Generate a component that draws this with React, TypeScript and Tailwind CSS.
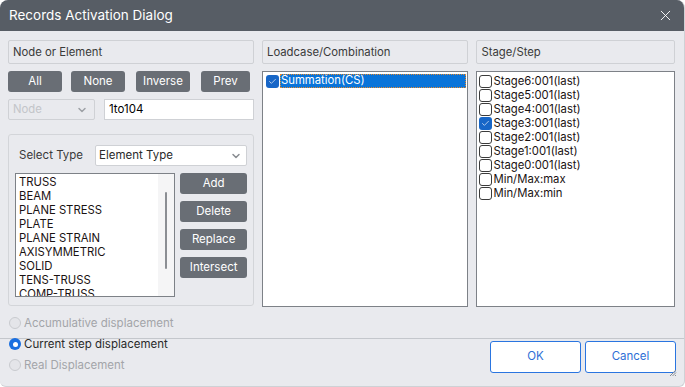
import React from 'react';
import { ChevronDown, X, Check } from 'lucide-react';

const elementTypes = [
  'TRUSS',
  'BEAM',
  'PLANE STRESS',
  'PLATE',
  'PLANE STRAIN',
  'AXISYMMETRIC',
  'SOLID',
  'TENS-TRUSS',
  'COMP-TRUSS',
];

const stages = [
  { label: 'Stage6:001(last)', checked: false },
  { label: 'Stage5:001(last)', checked: false },
  { label: 'Stage4:001(last)', checked: false },
  { label: 'Stage3:001(last)', checked: true },
  { label: 'Stage2:001(last)', checked: false },
  { label: 'Stage1:001(last)', checked: false },
  { label: 'Stage0:001(last)', checked: false },
  { label: 'Min/Max:max', checked: false },
  { label: 'Min/Max:min', checked: false },
];

const GroupHeader: React.FC<{ title: string }> = ({ title }) => (
  <div className="h-[24px] flex items-center px-[4px] border border-[#cfd1d5] rounded-[2px] text-[11.3px] text-[#3a3a3a]">
    {title}
  </div>
);

const GrayButton: React.FC<{ label: string; className?: string }> = ({ label, className }) => (
  <button
    className={`h-[21px] rounded-[3px] bg-[#696e75] text-white text-[11.5px] flex items-center justify-center ${className ?? ''}`}
  >
    {label}
  </button>
);

const CheckBox: React.FC<{ checked: boolean }> = ({ checked }) =>
  checked ? (
    <span className="w-[13px] h-[13px] shrink-0 rounded-[3px] bg-[#1766c7] flex items-center justify-center">
      <Check size={9} strokeWidth={2} className="text-[#dbe6f5]" />
    </span>
  ) : (
    <span className="w-[13px] h-[13px] shrink-0 rounded-[3px] border border-[#3b3b3b] bg-white" />
  );

const Radio: React.FC<{ label: string; checked?: boolean; disabled?: boolean }> = ({ label, checked, disabled }) => (
  <div className="flex items-center gap-[3px] h-[14px] text-[11.5px] leading-[14px]">
    {checked ? (
      <span className="w-[12px] h-[12px] rounded-full bg-[#1a6fe0] flex items-center justify-center">
        <span className="w-[5px] h-[5px] rounded-full bg-white" />
      </span>
    ) : (
      <span className="w-[12px] h-[12px] rounded-full border border-[#c9cbcf] bg-[#e4e5e9]" />
    )}
    <span className={disabled ? 'text-[#a3a5a9]' : 'text-[#2a2a2a]'}>{label}</span>
  </div>
);

export default function App() {
  return (
    <div className="w-[685px] h-[387px] bg-white" style={{ fontFamily: 'Inter, "Noto Sans", sans-serif' }}>
      <div className="w-[685px] h-[387px] flex flex-col rounded-t-[8px] rounded-b-[6px] overflow-hidden border-r border-b border-[#cfd1d5] bg-[#e9eaee]">
        {/* title bar */}
        <div className="h-[31px] shrink-0 bg-[#575d65] flex items-center justify-between pl-[9px] pr-[10px]">
          <span className="text-white text-[13.5px]">Records Activation Dialog</span>
          <X size={17} strokeWidth={1.3} className="text-white" />
        </div>

        {/* main area */}
        <div className="flex pt-[9px] pl-[8px] pr-[9px] gap-[8px]">
          {/* left column */}
          <div className="w-[246px] flex flex-col">
            <GroupHeader title="Node or Element" />
            <div className="flex mt-[7px]">
              <GrayButton label="All" className="w-[54px]" />
              <GrayButton label="None" className="w-[54px] ml-[9px]" />
              <GrayButton label="Inverse" className="w-[54px] ml-[11px]" />
              <GrayButton label="Prev" className="w-[49px] ml-[11px]" />
            </div>
            <div className="flex mt-[7px] gap-[9px]">
              <div className="w-[87px] h-[21px] rounded-[2px] border border-[#cfd1d5] bg-[#e9eaee] flex items-center justify-between pl-[4px] pr-[6px]">
                <span className="text-[11.3px] text-[#c3c5c9]">Node</span>
                <ChevronDown size={12} strokeWidth={3} className="text-[#9ea1a6]" />
              </div>
              <div className="flex-1 h-[21px] bg-white border border-[#cfd1d5] flex items-center px-[4px] text-[11.5px] text-black">
                1to104
              </div>
            </div>
            <div className="mt-[14px] h-[172px] border border-[#d3d5d9] rounded-[3px] px-[6px] pt-[10px]">
              <div className="flex items-center">
                <span className="w-[80px] pl-[4px] text-[11.5px] text-[#3a3a3a]">Select Type</span>
                <div className="flex-1 h-[21px] bg-white border border-[#cfd1d5] rounded-[2px] flex items-center justify-between pl-[3px] pr-[4px]">
                  <span className="text-[11.5px] text-[#2a2a2a]">Element Type</span>
                  <ChevronDown size={12} strokeWidth={3} className="text-[#8a8d92]" />
                </div>
              </div>
              <div className="flex mt-[7px]">
                <div className="w-[161px] h-[124px] bg-white border border-[#7d8187] overflow-hidden flex">
                  <div className="flex-1 pl-[3px] pt-[1px] text-[11.3px] leading-[14px] text-[#1a1212]">
                    {elementTypes.map((t) => (
                      <div key={t} className="h-[14px] whitespace-nowrap">{t}</div>
                    ))}
                  </div>
                  <div className="w-[16px] bg-[#f5f5f6] flex justify-center pt-[18px]">
                    <div className="w-[2px] h-[77px] bg-[#8b8e93] rounded-full" />
                  </div>
                </div>
                <div className="flex flex-col gap-[7px] ml-[5px] w-[67px]">
                  <GrayButton label="Add" />
                  <GrayButton label="Delete" />
                  <GrayButton label="Replace" />
                  <GrayButton label="Intersect" />
                </div>
              </div>
            </div>
          </div>

          {/* middle column */}
          <div className="w-[207px] flex flex-col">
            <GroupHeader title="Loadcase/Combination" />
            <div className="mt-[7px] h-[236px] bg-white border border-[#7d8187] pt-[2px] pl-[3px] pr-[1px]">
              <div className="flex items-center gap-[1px]">
                <CheckBox checked />
                <div className="flex-1 h-[14px] bg-[#0a74d9] border border-dotted border-[#e58a2f] flex items-center text-[11.3px] text-white leading-none">
                  Summation(CS)
                </div>
              </div>
            </div>
          </div>

          {/* right column */}
          <div className="w-[199px] flex flex-col">
            <GroupHeader title="Stage/Step" />
            <div className="mt-[7px] h-[236px] bg-white border border-[#7d8187] pt-[2px] pl-[2px]">
              {stages.map((s) => (
                <div key={s.label} className="flex items-center gap-[1px] h-[14px] text-[11.3px] text-[#1a1212]">
                  <CheckBox checked={s.checked} />
                  <span>{s.label}</span>
                </div>
              ))}
            </div>
          </div>
        </div>

        {/* options */}
        <div className="pl-[9px] pt-[9px] h-[31px]">
          <Radio label="Accumulative displacement" disabled />
        </div>
        <div className="border-t border-[#c4c7cc] flex-1 flex justify-between pl-[9px] pr-[8px]">
          <div className="flex flex-col gap-[7px] -mt-[2px]">
            <Radio label="Current step displacement" checked />
            <Radio label="Real Displacement" disabled />
          </div>
          <div className="flex gap-[4px] pt-[2px] relative">
            <button className="w-[91px] h-[32px] bg-white border border-[#2a75e0] rounded-[3px] text-[11.5px] text-[#2f6fd6]">
              OK
            </button>
            <button className="w-[91px] h-[32px] bg-white border border-[#2a75e0] rounded-[3px] text-[11.5px] text-[#2f6fd6]">
              Cancel
            </button>
            <svg className="absolute right-[-1px] top-[30px]" width="10" height="7" viewBox="0 0 10 7">
              <path d="M9 1 L3 7 M9 3.5 L5.5 7 M9 6 L8 7" stroke="#8a8d92" strokeWidth="1" />
            </svg>
          </div>
        </div>
      </div>
    </div>
  );
}
